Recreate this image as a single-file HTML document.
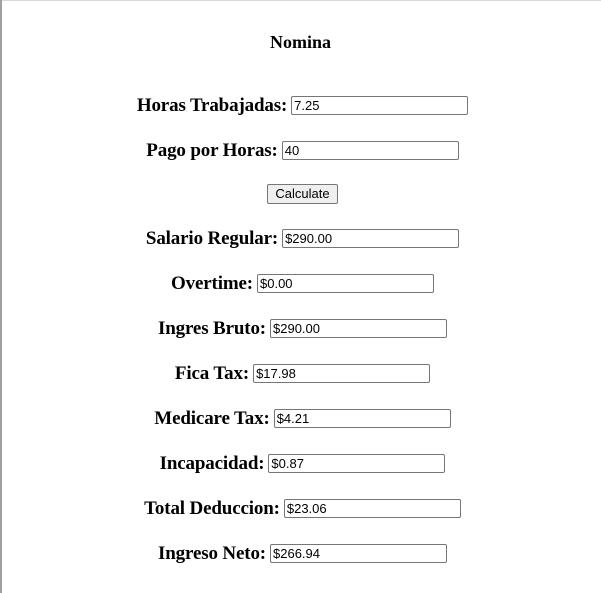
<!DOCTYPE html>
<html><head><style>
html,body{margin:0;padding:0;}
body{width:601px;height:593px;background:#fff;position:relative;overflow:hidden;font-family:"Liberation Serif",serif;}
.bt{position:absolute;left:0;top:0;width:601px;height:1px;background:#d9d9d9;}
.bl{position:absolute;left:0;top:0;width:2px;height:593px;background:#a0a0a0;}
.t{position:absolute;left:0;width:601px;top:31px;text-align:center;font-weight:bold;font-size:18px;line-height:22px;}
.r{position:absolute;left:2px;width:601px;height:21px;display:flex;justify-content:center;align-items:center;font-weight:bold;font-size:19px;letter-spacing:-0.15px;}
.r span{margin-right:4px;}
.i{width:171px;height:17px;border:1px solid #767676;border-radius:2px;font-family:"Liberation Sans",sans-serif;font-size:13px;font-weight:normal;line-height:17px;padding:0 2px;text-align:left;box-sizing:content-box;letter-spacing:0;}
.b{font-family:"Liberation Sans",sans-serif;font-size:13px;font-weight:normal;border:1px solid #767676;background:#efefef;border-radius:2px;padding:1px 7px;line-height:16px;letter-spacing:0;}
</style></head><body>
<div class="bt"></div><div class="bl"></div>
<div class="t">Nomina</div>
<div class="r" style="top:95px"><span>Horas Trabajadas:</span><div class="i">7.25</div></div>
<div class="r" style="top:140px"><span>Pago por Horas:</span><div class="i">40</div></div>
<div class="r" style="top:183px"><div class="b">Calculate</div></div>
<div class="r" style="top:228px"><span>Salario Regular:</span><div class="i">$290.00</div></div>
<div class="r" style="top:273px"><span>Overtime:</span><div class="i">$0.00</div></div>
<div class="r" style="top:318px"><span>Ingres Bruto:</span><div class="i">$290.00</div></div>
<div class="r" style="top:363px"><span>Fica Tax:</span><div class="i">$17.98</div></div>
<div class="r" style="top:408px"><span>Medicare Tax:</span><div class="i">$4.21</div></div>
<div class="r" style="top:453px"><span>Incapacidad:</span><div class="i">$0.87</div></div>
<div class="r" style="top:498px"><span>Total Deduccion:</span><div class="i">$23.06</div></div>
<div class="r" style="top:543px"><span>Ingreso Neto:</span><div class="i">$266.94</div></div>
</body></html>
